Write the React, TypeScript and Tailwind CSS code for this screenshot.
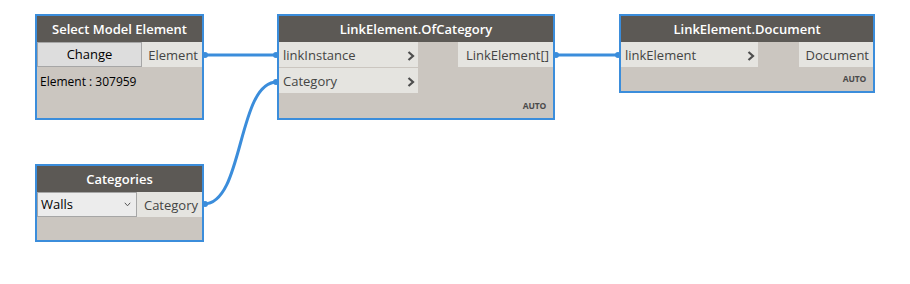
import type { ReactNode } from 'react';

const font = { fontFamily: '"Open Sans", "Noto Sans", sans-serif' };

function Chevron() {
    return (
        <svg width="8" height="10" viewBox="0 0 8 10" className="shrink-0">
            <path d="M1.5 1 L6 5 L1.5 9" fill="none" stroke="#4d4d4d" strokeWidth="2.2" />
        </svg>
    );
}

function InputPort({ label, width }: { label: string; width: number }) {
    return (
        <div
            className="flex items-center justify-between h-[25px] bg-[#e5e4e0] pl-[4px] pr-[3px] pt-[2px] text-[13px] text-[#444]"
            style={{ width }}
        >
            <span>{label}</span>
            <Chevron />
        </div>
    );
}

function OutputPort({ label, width }: { label: string; width: number }) {
    return (
        <div
            className="flex items-center justify-end h-[25px] bg-[#e5e4e0] pr-[4px] pt-[2px] text-[13px] text-[#444]"
            style={{ width }}
        >
            {label}
        </div>
    );
}

function Node({
    title,
    className,
    children,
}: {
    title: string;
    className: string;
    children: ReactNode;
}) {
    return (
        <div className={`absolute flex flex-col border-2 border-[#3b8ddb] bg-[#cbc6c0] ${className}`}>
            <div className="h-[26px] shrink-0 bg-[#5c5955] flex items-center justify-center pt-[2px] text-white text-[13px] font-semibold">
                {title}
            </div>
            {children}
        </div>
    );
}

function Auto() {
    return <span className="text-[8.5px] font-bold text-[#4a4a4a] tracking-tight">AUTO</span>;
}

export default function App() {
    return (
        <div className="relative w-[910px] h-[284px] bg-white overflow-hidden" style={font}>
            {/* wires */}
            <svg className="absolute left-0 top-0" width="910" height="284">
                <g stroke="#3b8ddb" strokeWidth="3" fill="none">
                    <path d="M204 55 L277 55" />
                    <path d="M555 55 L619 55" />
                    <path d="M204 204 C244 204 237 82 277 82" />
                </g>
                <g fill="#3b8ddb">
                    <circle cx="205" cy="55" r="3" />
                    <circle cx="276" cy="55" r="3" />
                    <circle cx="276" cy="82" r="3" />
                    <circle cx="556" cy="55" r="3" />
                    <circle cx="618" cy="55" r="3" />
                    <circle cx="205" cy="204" r="3" />
                </g>
            </svg>

            {/* Select Model Element */}
            <Node title="Select Model Element" className="left-[35px] top-[14px] w-[169px] h-[106px]">
                <div className="flex h-[25px]">
                    <button className="w-[105px] h-[25px] bg-[#dddddd] border border-[#a6a6a6] pt-[1px] text-[13px] text-black">
                        Change
                    </button>
                    <OutputPort label="Element" width={60} />
                </div>
                <div className="pl-[3px] pt-[6px] text-[12px] text-black">Element : 307959</div>
            </Node>

            {/* LinkElement.OfCategory */}
            <Node title="LinkElement.OfCategory" className="left-[277px] top-[14px] w-[278px] h-[106px]">
                <div className="flex justify-between">
                    <div className="flex flex-col gap-px">
                        <InputPort label="linkInstance" width={139} />
                        <InputPort label="Category" width={139} />
                    </div>
                    <OutputPort label="LinkElement[]" width={95} />
                </div>
                <div className="flex-1 flex items-end justify-end pr-[7px] pb-[5px]">
                    <Auto />
                </div>
            </Node>

            {/* LinkElement.Document */}
            <Node title="LinkElement.Document" className="left-[619px] top-[14px] w-[256px] h-[79px]">
                <div className="flex justify-between">
                    <InputPort label="linkElement" width={137} />
                    <OutputPort label="Document" width={74} />
                </div>
                <div className="flex-1 flex items-end justify-end pr-[7px] pb-[5px]">
                    <Auto />
                </div>
            </Node>

            {/* Categories */}
            <Node title="Categories" className="left-[35px] top-[164px] w-[169px] h-[78px]">
                <div className="flex h-[25px]">
                    <div className="w-[100px] h-[25px] flex items-center justify-between bg-[#ececec] border border-[#a6a6a6] pl-[3px] pr-[5px] text-[13px] text-black">
                        <span>Walls</span>
                        <svg width="7" height="5" viewBox="0 0 7 5">
                            <path d="M0.8 0.8 L3.5 3.8 L6.2 0.8" fill="none" stroke="#555" strokeWidth="1" />
                        </svg>
                    </div>
                    <OutputPort label="Category" width={65} />
                </div>
            </Node>
        </div>
    );
}
